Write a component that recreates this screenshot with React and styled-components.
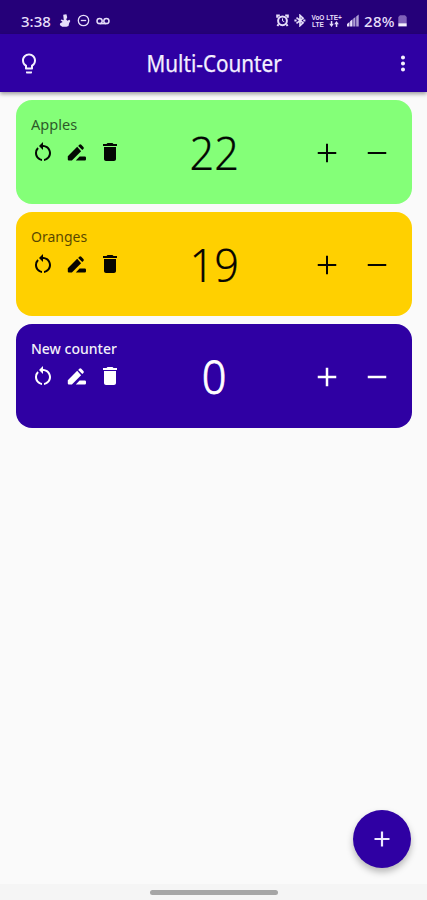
import React from "react";
import styled, { createGlobalStyle } from "styled-components";
import { MdLightbulbOutline, MdMoreVert, MdRestartAlt, MdDelete } from "react-icons/md";

const Global = createGlobalStyle`
  * { box-sizing: border-box; }
  body { margin: 0; background: #fafafa; font-family: "Noto Sans", "Open Sans", sans-serif; }
  button { border: 0; padding: 0; background: none; color: inherit; font: inherit; display: flex; }
`;

const Screen = styled.div`
  height: 900px;
  display: flex;
  flex-direction: column;
  overflow: hidden;
  background: #fafafa;
`;

const StatusBar = styled.div`
  flex: none;
  height: 34px;
  padding: 7px 20px 0 21px;
  display: flex;
  align-items: center;
  justify-content: space-between;
  background: #250079;
  color: #e6defa;
`;

const StatusGroup = styled.div`
  display: flex;
  align-items: center;
  gap: ${(p) => p.$gap}px;
  svg { display: block; }
`;

const StatusText = styled.span`
  width: ${(p) => p.$width}px;
  font-size: 15px;
  line-height: 20px;
  font-weight: 500;
  white-space: nowrap;
  letter-spacing: ${(p) => p.$spacing}px;
`;

const NetworkBadge = styled.div`
  display: grid;
  grid-template-columns: 14px 16px;
  grid-template-rows: 7px 7px;
  column-gap: 1px;
  justify-items: center;
  align-items: center;
  font: 700 6.5px/7px "Liberation Sans", sans-serif;
  white-space: nowrap;
`;

const AppBar = styled.header`
  flex: none;
  height: 58px;
  padding: 0 12px 0 17px;
  display: grid;
  grid-template-columns: 24px 1fr 24px;
  align-items: center;
  background: #2f00a3;
  color: #f4efff;
  box-shadow: 0 2px 4px rgba(0, 0, 0, 0.38);
`;

const Title = styled.h1`
  margin: 0;
  justify-self: center;
  font-size: 23px;
  line-height: 32px;
  font-weight: 400;
  white-space: nowrap;
  -webkit-text-stroke: 0.25px currentColor;
  transform: translateX(-2px) scaleX(${(p) => p.$squeeze});
`;

const List = styled.main`
  flex: 1;
  padding: 8px 15px 0 16px;
  display: flex;
  flex-direction: column;
  gap: 8px;
`;

const Card = styled.section`
  height: 104px;
  padding: 13px 23px 0 15px;
  border-radius: 16px;
  display: grid;
  grid-template-columns: 132px 1fr 124px;
  background: ${(p) => p.$bg};
  color: ${(p) => p.$fg};
`;

const Name = styled.div`
  font-size: 14px;
  line-height: 22px;
  font-weight: ${(p) => p.$weight};
  opacity: ${(p) => p.$opacity};
  white-space: nowrap;
  transform-origin: left;
  transform: translateY(0.5px) scaleX(${(p) => p.$squeeze});
`;

const Tools = styled.div`
  display: flex;
  gap: 9.5px;
  padding-top: 5px;
`;

const Value = styled.div`
  justify-self: center;
  font-size: 46px;
  line-height: 79px;
  font-weight: 300;
  -webkit-text-stroke: ${(p) => p.$stroke}px currentColor;
  transform: scaleX(0.94);
`;

const Steppers = styled.div`
  display: flex;
  justify-content: flex-end;
  gap: 22px;
  padding-top: 26px;
  margin-right: -2px;
`;

const Fab = styled.button`
  position: absolute;
  left: 353px;
  top: 810px;
  width: 58px;
  height: 58px;
  border-radius: 50%;
  align-items: center;
  justify-content: center;
  background: #2f00a3;
  color: #eee8ff;
  box-shadow: 0 4px 7px rgba(0, 0, 0, 0.27);
`;

const NavBar = styled.div`
  flex: none;
  height: 16px;
  display: flex;
  justify-content: center;
  padding-top: 6px;
  background: #f5f5f5;
`;

const Handle = styled.div`
  width: 128px;
  height: 5px;
  border-radius: 3px;
  background: #a6a6a6;
`;

const StepIcon = ({ plus, size, length, weight }) => {
  const c = size / 2;
  const h = length / 2;
  return (
    <svg width={size} height={size} viewBox={`0 0 ${size} ${size}`} fill="none" stroke="currentColor" strokeWidth={weight}>
      <path d={`M${c - h} ${c}h${length}${plus ? `M${c} ${c - h}v${length}` : ""}`} />
    </svg>
  );
};

const RenameIcon = () => (
  <svg width="24" height="24" viewBox="0 0 24 24" fill="currentColor">
    <path d="M14.6 16.6l-3.8 3.8h9a1.2 1.2 0 0 0 1.2-1.2v-1.4a1.2 1.2 0 0 0-1.2-1.2zM12.2 6.8L2.8 16.2v3.2a1 1 0 0 0 1 1h3.1l9.2-9.2zM18.4 8.9a1.4 1.4 0 0 0 0-2l-2.1-2.1a1.4 1.4 0 0 0-2 0l-1.1 1.1 4.1 4.1z" />
  </svg>
);

const SnowmanIcon = () => (
  <svg width="12" height="13" viewBox="0 0 12 13" fill="currentColor">
    <path d="M4.2.8l3.2-.5.8 3-1 2.2 1.2 1.3 2-1 .9 1.1-1.2 2.3-.6 2.7-2 .9H3.2L.8 11l.4-1.8L3.6 8 1.6 6.3l.8-.8 2.4.8z" />
  </svg>
);

const DndIcon = () => (
  <svg width="13" height="13" viewBox="0 0 13 13" fill="none" stroke="currentColor" strokeWidth="1.3">
    <circle cx="6.5" cy="6.5" r="5.2" />
    <path d="M3.8 6.5h5.4" />
  </svg>
);

const VoicemailIcon = () => (
  <svg width="14" height="8" viewBox="0 0 14 8" fill="none" stroke="currentColor" strokeWidth="1.5">
    <circle cx="3.6" cy="4" r="2.6" />
    <circle cx="10.4" cy="4" r="2.6" />
    <path d="M3.6 6.6h6.8" />
  </svg>
);

const AlarmIcon = () => (
  <svg width="13" height="13" viewBox="0 0 13 13" fill="none">
    <circle cx="6.5" cy="6.8" r="4.4" stroke="currentColor" strokeWidth="2" />
    <path d="M1.2 3.8V1.4h2.6M9.2 1.4h2.6v2.4M2.6 10.2l-1.2 1.8M10.4 10.2l1.2 1.8" stroke="currentColor" strokeWidth="2" />
    <path d="M6.5 4.4v2.5l1.8.8" stroke="currentColor" strokeWidth="1" />
  </svg>
);

const BluetoothIcon = () => (
  <svg width="12" height="13" viewBox="0 0 12 13" fill="none" stroke="currentColor" strokeWidth="1.6">
    <path d="M2.5 3.6l6.6 5.2L6 11.7V1.3l3.1 2.9-6.6 5.2" />
    <path d="M.4 6.5h2.2M9.2 6.5h2.2" strokeWidth="2.2" />
  </svg>
);

const DataArrows = () => (
  <svg width="10" height="6" viewBox="0 0 10 6" fill="currentColor">
    <path d="M1.8 0h1.5v2.8h1.5L2.5 6 .2 2.8h1.6zM6.8 6h1.5V3.2h1.5L7.5 0 5.2 3.2h1.6z" />
  </svg>
);

const SignalIcon = () => (
  <svg width="12" height="13" viewBox="0 0 12 13" fill="currentColor">
    <path d="M0 12.5V10l2.5-2v4.5zM3.1 12.5V7.2l2.4-2v7.3z" />
    <path d="M6.2 12.5V4.7l2.2-1.8v9.6zM9.2 12.5V2.4L11.7.6v11.9z" opacity=".72" />
  </svg>
);

const BatteryIcon = () => (
  <svg width="9" height="13" viewBox="0 0 9 13">
    <path d="M.3 9V3L2 1.2h5L8.7 3v6z" fill="#8061b9" />
    <path d="M.3 9.2h8.4v3.2H.3z" fill="#f5f0ff" />
  </svg>
);

const counters = [
  { name: "Apples", value: 22, bg: "#84ff78", fg: "#030803", weight: 400, outline: 0.2, opacity: 0.68, squeeze: 1.04, stroke: 2 },
  { name: "Oranges", value: 19, bg: "#ffd000", fg: "#080600", weight: 400, outline: 0.2, opacity: 0.68, squeeze: 1.0, stroke: 2 },
  { name: "New counter", value: 0, bg: "#2f00a3", fg: "#ffffff", weight: 500, outline: 0.8, opacity: 0.94, squeeze: 1.0, stroke: 2.5 },
];

const Counter = ({ item }) => (
  <Card $bg={item.bg} $fg={item.fg}>
    <div>
      <Name $weight={item.weight} $opacity={item.opacity} $squeeze={item.squeeze}>{item.name}</Name>
      <Tools>
        <button aria-label="Reset"><MdRestartAlt size={24} /></button>
        <button aria-label="Rename"><RenameIcon /></button>
        <button aria-label="Delete"><MdDelete size={24} /></button>
      </Tools>
    </div>
    <Value $stroke={item.outline}>{item.value}</Value>
    <Steppers>
      <button aria-label="Increase"><StepIcon plus size={28} length={18.5} weight={item.stroke} /></button>
      <button aria-label="Decrease"><StepIcon size={28} length={18.5} weight={item.stroke} /></button>
    </Steppers>
  </Card>
);

export default function App() {
  return (
    <Screen>
      <Global />
      <StatusBar>
        <StatusGroup $gap={6}>
          <StatusText $width={32} $spacing={0}>3:38</StatusText>
          <SnowmanIcon />
          <DndIcon />
          <VoicemailIcon />
        </StatusGroup>
        <StatusGroup $gap={5}>
          <AlarmIcon />
          <BluetoothIcon />
          <NetworkBadge>
            <span>VoO</span>
            <span>LTE+</span>
            <span>LTE</span>
            <DataArrows />
          </NetworkBadge>
          <SignalIcon />
          <StatusGroup $gap={0}>
            <StatusText $width={34} $spacing={0.3}>28%</StatusText>
            <BatteryIcon />
          </StatusGroup>
        </StatusGroup>
      </StatusBar>
      <AppBar>
        <button aria-label="Theme"><MdLightbulbOutline size={25} /></button>
        <Title $squeeze={0.9}>Multi-Counter</Title>
        <button aria-label="More"><MdMoreVert size={25} /></button>
      </AppBar>
      <List>
        {counters.map((c) => <Counter key={c.name} item={c} />)}
      </List>
      <NavBar><Handle /></NavBar>
      <Fab aria-label="Add counter"><StepIcon plus size={24} length={15} weight={2.2} /></Fab>
    </Screen>
  );
}
